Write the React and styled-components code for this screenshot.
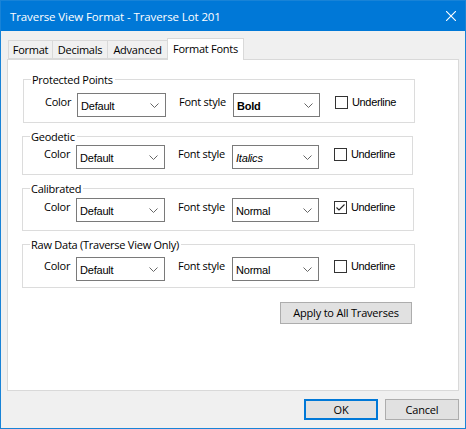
import React from 'react'
import styled, { createGlobalStyle } from 'styled-components'

const GlobalStyle = createGlobalStyle`
  html, body {
    margin: 0;
    padding: 0;
    background: #f0f0f0;
  }
  * {
    box-sizing: border-box;
  }
`

const uiFont = `"Segoe UI", "Open Sans", "Noto Sans", sans-serif`
const ctlFont = `"Liberation Sans", Arial, sans-serif`

const Window = styled.div`
  width: 466px;
  height: 429px;
  border: 1px solid #1883d7;
  background: #f0f0f0;
  display: flex;
  flex-direction: column;
  font-family: ${uiFont};
  font-size: 11px;
  letter-spacing: -0.25px;
  color: #000;
`

const TitleBar = styled.div`
  height: 30px;
  flex: none;
  background: #0078d7;
  color: #fff;
  display: flex;
  align-items: center;
  justify-content: space-between;
  padding: 0 9px 0 9px;
`

const Title = styled.span`
  font-size: 11.5px;
  letter-spacing: -0.1px;
  line-height: 16px;
  margin-top: 1px;
`

const Body = styled.div`
  flex: 1;
  display: flex;
  flex-direction: column;
  padding: 7px 6px 8px 6px;
`

const TabStrip = styled.div`
  height: 21px;
  display: flex;
  align-items: flex-end;
  padding-left: 1px;
  flex: none;
`

const Tab = styled.div`
  width: ${p => p.$w}px;
  height: ${p => (p.$active ? 22 : 19)}px;
  margin-bottom: ${p => (p.$active ? -1 : 0)}px;
  margin-left: -1px;
  border: 1px solid #d9d9d9;
  border-bottom: ${p => (p.$active ? 'none' : '1px solid #d9d9d9')};
  background: ${p => (p.$active ? '#fff' : '#f0f0f0')};
  position: relative;
  z-index: ${p => (p.$active ? 1 : 0)};
  display: flex;
  justify-content: center;
  padding-top: ${p => (p.$active ? 2 : 1)}px;
  line-height: 16px;
  white-space: nowrap;
  &:first-child {
    margin-left: 0;
  }
`

const Panel = styled.div`
  flex: 1;
  background: #fff;
  border: 1px solid #d9d9d9;
  padding: 19px 44px 0 14px;
  display: flex;
  flex-direction: column;
`

const Stack = styled.div`
  display: flex;
  flex-direction: column;
  gap: 13px;
`

const Group = styled.div`
  border: 1px solid #dcdcdc;
  margin-left: ${p => p.$shift || 0}px;
  margin-right: ${p => -(p.$grow || 0)}px;
  padding: 0 0 ${p => p.$pb}px 21px;
`

const Legend = styled.div`
  display: table;
  background: #fff;
  line-height: 15px;
  height: 15px;
  margin: -8px 0 0 -14px;
  padding: 0 2px 0 1px;
  white-space: nowrap;
`

const Row = styled.div`
  display: flex;
  align-items: flex-start;
  margin-top: ${p => p.$mt}px;
`

const Label = styled.div`
  width: ${p => p.$w}px;
  line-height: 16px;
  margin-top: 1px;
  flex: none;
  white-space: nowrap;
`

const Combo = styled.div`
  width: ${p => p.$w}px;
  height: 24px;
  margin-right: ${p => p.$mr}px;
  border: 1px solid #7a7a7a;
  background: #fff;
  display: flex;
  align-items: center;
  justify-content: space-between;
  padding: 0 6px 0 3px;
  flex: none;
`

const ComboText = styled.span`
  font-family: ${ctlFont};
  font-size: 11px;
  font-weight: ${p => (p.$bold ? 700 : 400)};
  font-style: ${p => (p.$italic ? 'italic' : 'normal')};
  letter-spacing: -0.2px;
  padding-top: 1px;
`

const Check = styled.label`
  display: flex;
  align-items: center;
  gap: 4px;
  margin-top: 3px;
  font-family: ${ctlFont};
  font-size: 11px;
  letter-spacing: -0.35px;
  line-height: 13px;
`

const Box = styled.span`
  width: 13px;
  height: 13px;
  border: 1px solid #333;
  background: #fff;
  display: flex;
  align-items: center;
  justify-content: center;
`

const ApplyRow = styled.div`
  display: flex;
  justify-content: flex-end;
  margin-top: 14px;
  padding-right: 2px;
`

const Button = styled.button`
  font-family: ${uiFont};
  font-size: 11px;
  letter-spacing: -0.2px;
  color: #000;
  background: #e1e1e1;
  border: 1px solid #adadad;
  height: ${p => p.$h || 21}px;
  width: ${p => p.$w}px;
  padding: 0;
  line-height: 16px;
`

const PrimaryButton = styled(Button)`
  border: 2px solid #0078d7;
`

const ButtonRow = styled.div`
  display: flex;
  justify-content: flex-end;
  gap: 7px;
  margin-top: 8px;
  flex: none;
`

const Chevron = () => (
  <svg width="9" height="5" viewBox="0 0 9 5">
    <path d="M0.5 0.5 L4.5 4.5 L8.5 0.5" fill="none" stroke="#666" strokeWidth="1" />
  </svg>
)

const CloseIcon = () => (
  <svg width="10" height="10" viewBox="0 0 10 10">
    <path d="M0 0 L10 10 M10 0 L0 10" stroke="#fff" strokeWidth="1.1" />
  </svg>
)

const Tick = () => (
  <svg width="11" height="11" viewBox="0 0 11 11">
    <path d="M1.5 5.5 L4 8 L9.5 2.5" fill="none" stroke="#222" strokeWidth="1.1" />
  </svg>
)

const groups = [
  { name: 'Protected Points', style: 'Bold', bold: true, checked: false, pt: 13, pb: 5, shift: 1, grow: 1 },
  { name: 'Geodetic', style: 'Italics', italic: true, checked: false, pt: 8, pb: 5, grow: -1 },
  { name: 'Calibrated', style: 'Normal', checked: true, pt: 9, pb: 8 },
  { name: 'Raw Data (Traverse View Only)', style: 'Normal', checked: false, pt: 12, pb: 6, grow: 1 },
]

const tabs = [
  { label: 'Format', w: 45 },
  { label: 'Decimals', w: 56 },
  { label: 'Advanced', w: 61 },
  { label: 'Format Fonts', w: 77, active: true },
]

export default function App() {
  return (
    <>
      <GlobalStyle />
      <Window>
        <TitleBar>
          <Title>Traverse View Format - Traverse Lot 201</Title>
          <CloseIcon />
        </TitleBar>
        <Body>
          <TabStrip>
            {tabs.map(t => (
              <Tab key={t.label} $w={t.w} $active={t.active}>{t.label}</Tab>
            ))}
          </TabStrip>
          <Panel>
            <Stack>
              {groups.map(g => (
                <Group key={g.name} $pb={g.pb} $shift={g.shift} $grow={g.grow}>
                  <Legend>{g.name}</Legend>
                  <Row $mt={g.pt - 7}>
                    <Label $w={32}>Color</Label>
                    <Combo $w={89} $mr={13}>
                      <ComboText>Default</ComboText>
                      <Chevron />
                    </Combo>
                    <Label $w={54}>Font style</Label>
                    <Combo $w={87} $mr={15}>
                      <ComboText $bold={g.bold} $italic={g.italic}>{g.style}</ComboText>
                      <Chevron />
                    </Combo>
                    <Check>
                      <Box>{g.checked && <Tick />}</Box>
                      Underline
                    </Check>
                  </Row>
                </Group>
              ))}
            </Stack>
            <ApplyRow>
              <Button $w={132} $h={22}>Apply to All Traverses</Button>
            </ApplyRow>
          </Panel>
          <ButtonRow>
            <PrimaryButton $w={74}>OK</PrimaryButton>
            <Button $w={74}>Cancel</Button>
          </ButtonRow>
        </Body>
      </Window>
    </>
  )
}
